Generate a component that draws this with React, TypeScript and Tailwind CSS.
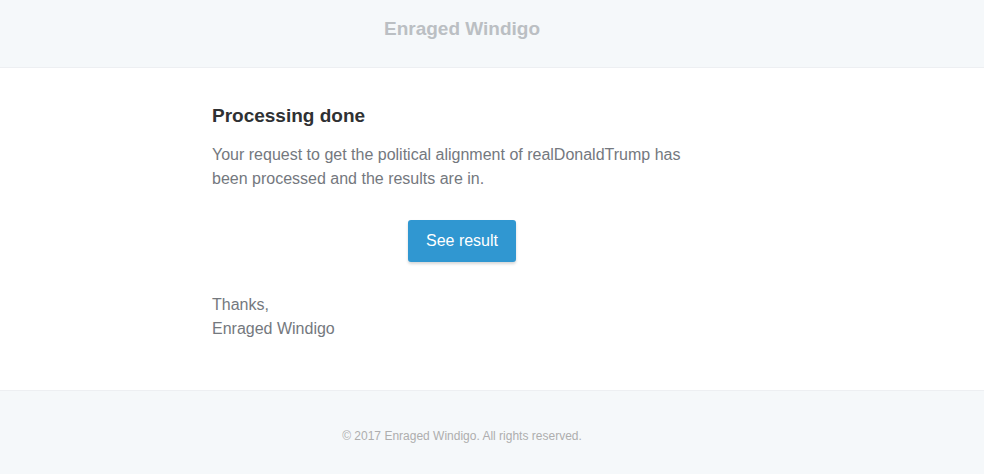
const App = () => {
    return (
        <div className="w-full min-h-[474px] bg-[#f5f8fa] font-['Liberation_Sans',Arial,sans-serif]">
            <div className="h-[67px] flex justify-center items-center pr-[60px] pb-2">
                <a className="text-[19px] font-bold text-[#bbbfc3]">Enraged Windigo</a>
            </div>
            <div className="w-full bg-white border-y border-[#edeff2] pr-[60px]">
                <div className="w-[570px] mx-auto p-[35px]">
                    <h1 className="text-[19px] leading-[22px] font-bold text-[#2f3133] mt-[2px] mb-[16px]">Processing done</h1>
                    <p className="text-base leading-6 text-[#74787e]">
                        Your request to get the political alignment of realDonaldTrump has been processed and the results are in.
                    </p>
                    <div className="flex justify-center mt-[29px] mb-[31px]">
                        <a className="bg-[#3097d1] text-white text-base leading-[22px] px-[18px] py-[10px] rounded-[3px] shadow-[0_2px_3px_rgba(0,0,0,0.16)]">See result</a>
                    </div>
                    <p className="text-base leading-6 text-[#74787e] mb-[14px]">
                        Thanks,<br />Enraged Windigo
                    </p>
                </div>
            </div>
            <div className="w-full pr-[60px]">
                <div className="w-[570px] mx-auto pt-[36px] px-[35px] pb-[34px] text-center">
                    <p className="text-xs leading-[18px] text-[#aeaeae]">© 2017 Enraged Windigo. All rights reserved.</p>
                </div>
            </div>
        </div>
    )
}

export default App
